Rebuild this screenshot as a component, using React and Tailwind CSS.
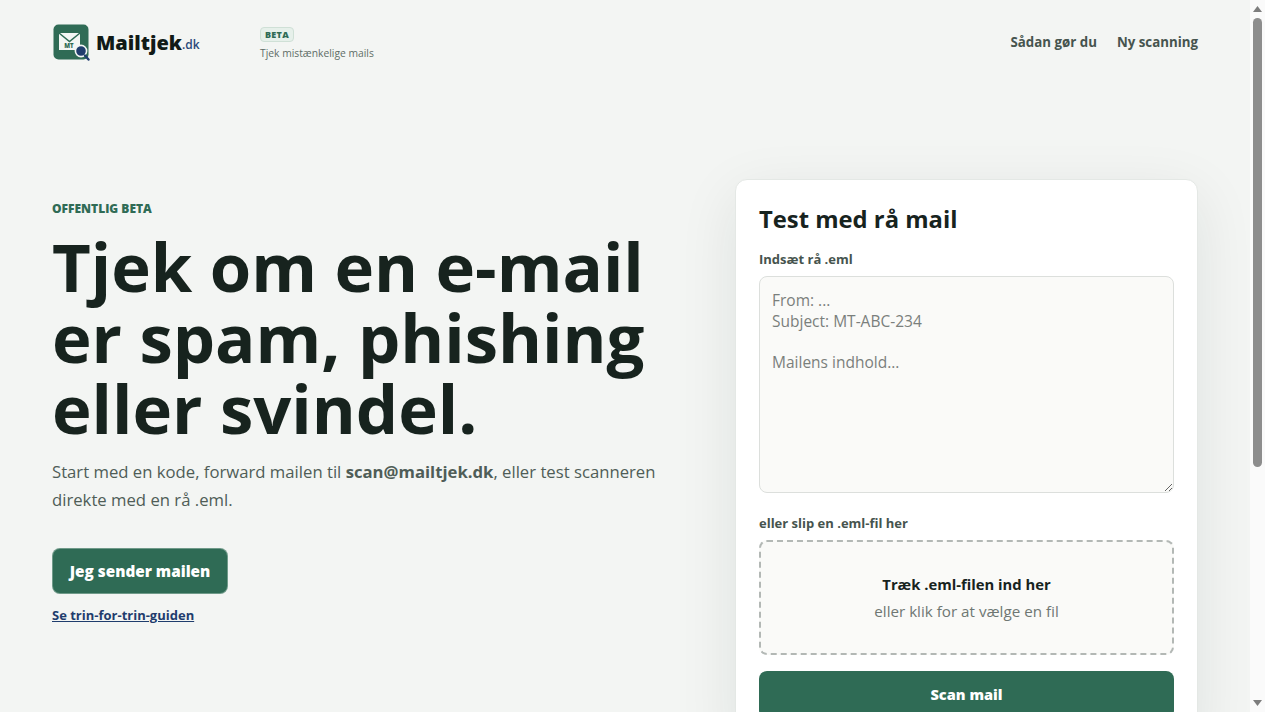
function Logo() {
  return (
    <svg width="37" height="37" viewBox="0 0 37 37" className="ml-px shrink-0">
      <rect x="0.5" y="0.5" width="35" height="35" rx="5" fill="#2f6b55" />
      <path d="M6 9h21v17H6z" fill="#f3f6f4" />
      <path d="M6 9l10.5 8.5L27 9" fill="none" stroke="#2f6b55" strokeWidth="1.5" />
      <text x="16" y="24" textAnchor="middle" fontSize="6" fontWeight="800" fill="#2f6b55">MT</text>
      <circle cx="28" cy="27" r="5.6" fill="#1f3d6d" stroke="#f3f6f4" strokeWidth="1.6" />
      <path d="M32 31.5l3.5 4" stroke="#1f3d6d" strokeWidth="2.4" strokeLinecap="round" />
    </svg>
  );
}

function Scrollbar() {
  return (
    <div className="fixed inset-y-0 right-0 flex w-[15px] flex-col items-center bg-[#fafafa]">
      <svg width="9" height="6" viewBox="0 0 9 6" className="mt-[6px] shrink-0"><path d="M4.5 0L9 6H0z" fill="#7d7d7d" /></svg>
      <div className="mt-[6px] h-[449px] w-[9px] rounded-full bg-[#8d8d8d]" />
      <svg width="9" height="6" viewBox="0 0 9 6" className="mt-auto mb-[6px] shrink-0"><path d="M0 0h9L4.5 6z" fill="#7d7d7d" /></svg>
    </div>
  );
}

export default function App() {
  return (
    <div className="min-h-[1072px] overflow-hidden bg-[#f3f5f3] pr-[15px] text-[#17231e] font-['Open_Sans','Noto_Sans',sans-serif]">
      <Scrollbar />
      <div className="mx-auto w-[1146px]">
        <header className="flex items-center justify-between h-[85px]">
          <div className="flex items-center">
            <div className="flex items-center w-[208px]">
              <Logo />
              <span className="ml-[6px] text-[20px] font-black text-[#111a16]">Mailtjek</span>
              <span className="mt-[5px] text-[12px] font-semibold text-[#2b4a7a]">.dk</span>
            </div>
            <div className="-mt-[6px]">
              <span className="inline-block rounded border border-[#cfe0d6] bg-[#e6f0ea] px-[4px] text-[9px] leading-[13px] font-extrabold tracking-[0.3px] text-[#2f6b55]">BETA</span>
              <p className="mt-[2px] text-[10.3px] leading-[14px] text-[#5f6d67]">Tjek mistænkelige mails</p>
            </div>
          </div>
          <nav className="flex gap-5 text-[13.3px] font-bold text-[#46544e]">
            <a>Sådan gør du</a>
            <a>Ny scanning</a>
          </nav>
        </header>

        <main className="grid grid-cols-[1fr_463px] items-start mt-[94px] pb-10">
          <div className="pt-[22px]">
            <p className="text-[12px] leading-4 font-extrabold uppercase text-[#2f6b55]">Offentlig beta</p>
            <h1 className="mt-[14px] text-[67px] leading-[71px] font-bold text-[#17231e]">
              Tjek om en e-mail<br />er spam, phishing<br />eller svindel.
            </h1>
            <p className="mt-[14px] text-[16.7px] leading-[28px] text-[#4f5d57]">
              Start med en kode, forward mailen til <strong className="font-bold">scan@mailtjek.dk</strong>, eller test scanneren<br />direkte med en rå .eml.
            </p>
            <button className="mt-[34px] block h-[46px] w-[176px] rounded-lg border border-[#cfe0d6]/40 bg-[#2f6b55] text-[15.3px] font-extrabold text-white">Jeg sender mailen</button>
            <a className="mt-[13px] inline-block text-[13px] leading-4 font-bold text-[#1f3d6d] underline">Se trin-for-trin-guiden</a>
          </div>

          <section className="rounded-xl border border-[#e4e8e5] bg-white px-[23px] pt-[22px] pb-6 shadow-[0_16px_60px_rgba(23,35,30,0.09)]">
            <h2 className="text-[23.8px] leading-[34px] font-bold">Test med rå mail</h2>
            <label className="mt-[14px] block text-[13px] leading-[18px] font-bold text-[#46544e]">Indsæt rå .eml</label>
            <textarea
              readOnly
              className="mt-[8px] block h-[217px] w-full rounded-lg border border-[#dcdfdc] bg-[#fafaf8] px-3 pt-[13px] pb-[14px] text-[15.5px] leading-[20.7px] placeholder:text-[#7a7f7c] outline-none"
              placeholder={'From: ...\nSubject: MT-ABC-234\n\nMailens indhold...'}
            />
            <label className="mt-[21px] block text-[13px] leading-[18px] font-bold text-[#46544e]">eller slip en .eml-fil her</label>
            <div className="mt-[8px] flex h-[115px] flex-col items-center justify-center rounded-lg border-2 border-dashed border-[#b3b8b5] bg-[#fafaf8]">
              <p className="text-[14.8px] leading-[22px] font-bold text-[#17231e]">Træk .eml-filen ind her</p>
              <p className="mt-[5px] text-[15.2px] leading-[22px] text-[#6f7773]">eller klik for at vælge en fil</p>
            </div>
            <button className="mt-[16px] block h-[48px] w-full rounded-lg bg-[#2f6b55] text-[14.6px] font-extrabold text-white">Scan mail</button>
          </section>
        </main>
      </div>
    </div>
  );
}
